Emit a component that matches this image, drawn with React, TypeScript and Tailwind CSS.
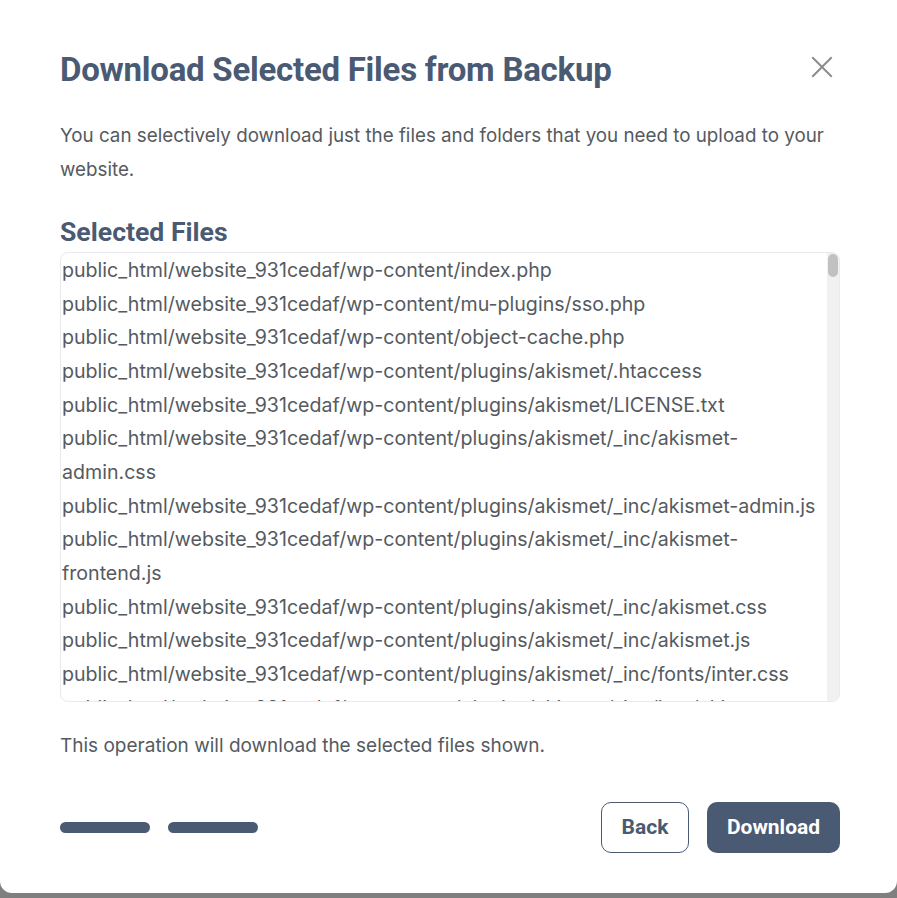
import React from "react";

const base = "public_html/website_931cedaf/wp-content/";

const files = [
  "index.php",
  "mu-plugins/sso.php",
  "object-cache.php",
  "plugins/akismet/.htaccess",
  "plugins/akismet/LICENSE.txt",
  "plugins/akismet/_inc/akismet-admin.css",
  "plugins/akismet/_inc/akismet-admin.js",
  "plugins/akismet/_inc/akismet-frontend.js",
  "plugins/akismet/_inc/akismet.css",
  "plugins/akismet/_inc/akismet.js",
  "plugins/akismet/_inc/fonts/inter.css",
  "plugins/akismet/_inc/img/akismet-refresh-logo.svg",
];

const heading = { fontFamily: "Roboto, sans-serif" };

export default function App() {
  return (
    <div className="w-[897px] h-[898px] bg-[#7f7f7f] overflow-hidden" style={{ fontFamily: "Inter, 'Noto Sans', sans-serif" }}>
      <div className="w-[897px] h-[893px] bg-white rounded-b-[12px] pl-[60px] pr-[57px] pt-[50px] text-[#555a60]">
        <div className="flex items-center justify-between">
          <h1 className="text-[33px] leading-[40px] font-bold text-[#4a5a73] tracking-[-0.25px]" style={heading}>
            Download Selected Files from Backup
          </h1>
          <button className="w-[24px] h-[24px] flex items-center justify-center text-[#8c8c8c] mr-[6px] -mt-[6px]">
            <svg width="22" height="22" viewBox="0 0 22 22" fill="none" stroke="currentColor" strokeWidth="2" strokeLinecap="square">
              <path d="M2 2L20 20M20 2L2 20" />
            </svg>
          </button>
        </div>
        <p className="mt-[29px] text-[18.8px] leading-[34px]">
          You can selectively download just the files and folders that you need to upload to your website.
        </p>
        <h2 className="mt-[29px] text-[26.6px] leading-[32px] font-bold text-[#4a5a73]" style={heading}>
          Selected Files
        </h2>
        <div className="mt-[4px] h-[450px] border border-[#e9e9ef] rounded-[8px] overflow-hidden flex">
          <div className="flex-1 min-w-0 overflow-hidden pt-[1px]">
            {files.map((f) => (
              <div key={f} className="text-[19.6px] leading-[33.67px] px-[1px] text-[#555a60]">
                {base + f}
              </div>
            ))}
          </div>
          <div className="w-[12px] shrink-0 bg-[#f1f1f1] pt-[1px] px-[1px]">
            <div className="h-[23px] rounded-full bg-[#c1c1c1]" />
          </div>
        </div>
        <p className="mt-[27px] text-[19px] leading-[34px]">This operation will download the selected files shown.</p>
        <div className="mt-[39px] flex items-center justify-between">
          <div className="flex gap-[18px]">
            <div className="w-[90px] h-[11px] rounded-full bg-[#4a5a73]" />
            <div className="w-[90px] h-[11px] rounded-full bg-[#4a5a73]" />
          </div>
          <div className="flex gap-[18px]">
            <button className="h-[51px] w-[88px] rounded-[10px] border border-[#4a5a73] text-[#4a5a73] font-bold text-[21px]" style={heading}>
              Back
            </button>
            <button className="h-[51px] w-[133px] rounded-[10px] bg-[#4a5a73] text-white font-bold text-[21px]" style={heading}>
              Download
            </button>
          </div>
        </div>
      </div>
    </div>
  );
}
